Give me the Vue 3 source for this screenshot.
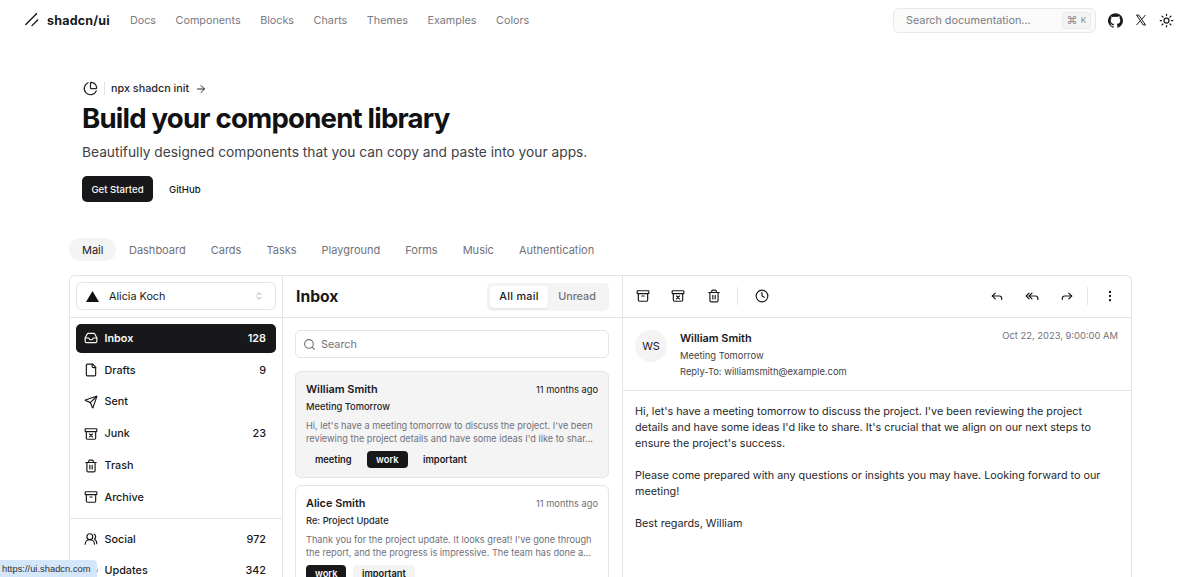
<template>
  <div class="page">
    <header class="topbar">
      <a class="logo">
        <svg width="18" height="18" viewBox="0 0 256 256" fill="none" stroke="#18181b" stroke-width="20" stroke-linecap="round">
          <line x1="208" y1="128" x2="128" y2="208" />
          <line x1="192" y1="40" x2="40" y2="192" />
        </svg>
        <span>shadcn/ui</span>
      </a>
      <nav class="topnav">
        <a v-for="link in topLinks" :key="link">{{ link }}</a>
      </nav>
      <div class="search-doc">
        <span>Search documentation...</span>
        <kbd><i>⌘</i>K</kbd>
      </div>
      <div class="top-icons">
        <svg width="15" height="15" viewBox="0 0 24 24" fill="#18181b">
          <path d="M12 .3a12 12 0 0 0-3.8 23.38c.6.12.83-.26.83-.57l-.02-2.04c-3.34.72-4.04-1.61-4.04-1.61-.55-1.39-1.33-1.76-1.33-1.76-1.09-.74.08-.73.08-.73 1.2.09 1.84 1.24 1.84 1.24 1.07 1.83 2.8 1.3 3.49 1 .1-.78.42-1.31.76-1.61-2.66-.3-5.47-1.33-5.47-5.93 0-1.31.47-2.38 1.24-3.22-.14-.3-.54-1.52.1-3.18 0 0 1.01-.32 3.3 1.23a11.5 11.5 0 0 1 6 0c2.28-1.55 3.29-1.23 3.29-1.23.64 1.66.24 2.88.12 3.18.77.84 1.23 1.91 1.23 3.22 0 4.61-2.81 5.63-5.48 5.92.42.37.81 1.1.81 2.22l-.01 3.29c0 .31.21.69.82.57A12 12 0 0 0 12 .3" />
        </svg>
        <svg width="12" height="12" viewBox="0 0 24 24" fill="none" stroke="#18181b" stroke-width="2">
          <path d="M3 2h4.5L21 22h-4.5zM21 2l-8 9M3 22l8-9" />
        </svg>
        <svg class="ico" width="15" height="15" viewBox="0 0 24 24">
          <circle cx="12" cy="12" r="4" />
          <path d="M12 2v2M12 20v2M4.93 4.93l1.41 1.41M17.66 17.66l1.41 1.41M2 12h2M20 12h2M6.34 17.66l-1.41 1.41M19.07 4.93l-1.41 1.41" />
        </svg>
      </div>
    </header>

    <main class="content">
      <section class="hero">
        <div class="announce">
          <svg class="ico" width="15" height="15" viewBox="0 0 24 24">
            <path d="M21 12c.55 0 1-.45.95-1A10 10 0 0 0 13 2.05c-.55-.05-1 .4-1 .95v8a1 1 0 0 0 1 1z" />
            <path d="M21.2 15.9A10 10 0 1 1 8 2.8" />
          </svg>
          <span class="announce-sep"></span>
          <span>npx shadcn init</span>
          <svg class="ico" width="12" height="12" viewBox="0 0 24 24">
            <path d="M5 12h14M12 5l7 7-7 7" />
          </svg>
        </div>
        <h1>Build your component library</h1>
        <p class="lead">Beautifully designed components that you can copy and paste into your apps.</p>
        <div class="hero-actions">
          <a class="btn-dark">Get Started</a>
          <a class="btn-ghost">GitHub</a>
        </div>
      </section>

      <div class="tabs">
        <a v-for="(tab, i) in tabs" :key="tab" :class="{ active: i === 0 }">{{ tab }}</a>
      </div>

      <section class="mail">
        <aside class="sidebar">
          <div class="account-row">
            <div class="account">
              <svg width="13" height="11" viewBox="0 0 13 11"><path d="M6.5 0 13 11H0z" fill="#111" /></svg>
              <span>Alicia Koch</span>
              <svg class="ico chev" width="10" height="10" viewBox="0 0 24 24"><path d="m7 15 5 5 5-5M7 9l5-5 5 5" /></svg>
            </div>
          </div>
          <ul class="folders">
            <li v-for="(f, i) in folders" :key="f.name" :class="{ selected: i === 0 }">
              <svg class="ico" width="14" height="14" viewBox="0 0 24 24" v-html="f.icon"></svg>
              <span>{{ f.name }}</span>
              <b v-if="f.count">{{ f.count }}</b>
            </li>
          </ul>
          <ul class="folders second">
            <li v-for="f in categories" :key="f.name">
              <svg class="ico" width="14" height="14" viewBox="0 0 24 24" v-html="f.icon"></svg>
              <span>{{ f.name }}</span>
              <b>{{ f.count }}</b>
            </li>
          </ul>
        </aside>

        <div class="list">
          <div class="list-head">
            <h2>Inbox</h2>
            <div class="toggle">
              <a class="on">All mail</a>
              <a>Unread</a>
            </div>
          </div>
          <div class="list-body">
            <div class="list-search">
              <svg class="ico" width="13" height="13" viewBox="0 0 24 24"><circle cx="11" cy="11" r="8" /><path d="m21 21-4.3-4.3" /></svg>
              <span>Search</span>
            </div>
            <article v-for="(m, i) in mails" :key="m.name" class="mail-card" :class="{ current: i === 0 }">
              <div class="mail-top">
                <strong>{{ m.name }}</strong>
                <time>11 months ago</time>
              </div>
              <div class="mail-subject">{{ m.subject }}</div>
              <p>{{ m.preview[0] }}<br />{{ m.preview[1] }}</p>
              <div class="tags">
                <span v-for="t in m.tags" :key="t" :class="['tag', m.tagStyle, { dark: t === 'work' }]">{{ t }}</span>
              </div>
            </article>
          </div>
        </div>

        <div class="reader">
          <div class="toolbar">
            <div class="tool-group">
              <button v-for="(ic, i) in toolsLeft" :key="i"><svg class="ico" width="14" height="14" viewBox="0 0 24 24" v-html="ic"></svg></button>
              <span class="tool-sep"></span>
              <button><svg class="ico" width="14" height="14" viewBox="0 0 24 24"><circle cx="12" cy="12" r="10" /><path d="M12 6v6l4 2" /></svg></button>
            </div>
            <div class="tool-group right">
              <button v-for="(ic, i) in toolsRight" :key="i"><svg class="ico" width="14" height="14" viewBox="0 0 24 24" v-html="ic"></svg></button>
              <span class="tool-sep"></span>
              <button><svg class="ico" width="14" height="14" viewBox="0 0 24 24"><circle cx="12" cy="12" r="1" /><circle cx="12" cy="5" r="1" /><circle cx="12" cy="19" r="1" /></svg></button>
            </div>
          </div>
          <div class="msg-head">
            <div class="avatar">WS</div>
            <div class="msg-meta">
              <strong>William Smith</strong>
              <span>Meeting Tomorrow</span>
              <span>Reply-To: williamsmith@example.com</span>
            </div>
            <time>Oct 22, 2023, 9:00:00 AM</time>
          </div>
          <div class="msg-body">
            <p>Hi, let's have a meeting tomorrow to discuss the project. I've been reviewing the project<br />details and have some ideas I'd like to share. It's crucial that we align on our next steps to<br />ensure the project's success.</p>
            <p>Please come prepared with any questions or insights you may have. Looking forward to our<br />meeting!</p>
            <p>Best regards, William</p>
          </div>
        </div>
      </section>
    </main>

    <div class="status-url">https://ui.shadcn.com</div>
  </div>
</template>

<script setup>
const topLinks = ['Docs', 'Components', 'Blocks', 'Charts', 'Themes', 'Examples', 'Colors']
const tabs = ['Mail', 'Dashboard', 'Cards', 'Tasks', 'Playground', 'Forms', 'Music', 'Authentication']

const archiveIcon = '<rect x="2" y="3" width="20" height="5" rx="1"/><path d="M4 8v11a2 2 0 0 0 2 2h12a2 2 0 0 0 2-2V8M10 12h4"/>'
const junkIcon = '<rect x="2" y="3" width="20" height="5" rx="1"/><path d="M4 8v11a2 2 0 0 0 2 2h12a2 2 0 0 0 2-2V8M9.5 12l5 5M14.5 12l-5 5"/>'
const trashIcon = '<path d="M3 6h18M19 6v14a2 2 0 0 1-2 2H7a2 2 0 0 1-2-2V6M8 6V4a2 2 0 0 1 2-2h4a2 2 0 0 1 2 2v2M10 11v6M14 11v6"/>'

const folders = [
  { name: 'Inbox', count: '128', icon: '<path d="M22 12h-6l-2 3h-4l-2-3H2"/><path d="M5.45 5.11 2 12v6a2 2 0 0 0 2 2h16a2 2 0 0 0 2-2v-6l-3.45-6.89A2 2 0 0 0 16.76 4H7.24a2 2 0 0 0-1.79 1.11z"/>' },
  { name: 'Drafts', count: '9', icon: '<path d="M15 2H6a2 2 0 0 0-2 2v16a2 2 0 0 0 2 2h12a2 2 0 0 0 2-2V7z"/><path d="M14 2v4a2 2 0 0 0 2 2h4"/>' },
  { name: 'Sent', icon: '<path d="M14.5 21.7a.5.5 0 0 0 .9 0l6.5-19a.5.5 0 0 0-.6-.6l-19 6.5a.5.5 0 0 0 0 .9l7.9 3.2a2 2 0 0 1 1.1 1.1z"/><path d="m21.85 2.15-10.94 10.93"/>' },
  { name: 'Junk', count: '23', icon: junkIcon },
  { name: 'Trash', icon: trashIcon },
  { name: 'Archive', icon: archiveIcon },
]
const categories = [
  { name: 'Social', count: '972', icon: '<path d="M18 21a8 8 0 0 0-16 0"/><circle cx="10" cy="8" r="5"/><path d="M22 20c0-3.37-2-6.5-4-8a5 5 0 0 0-.45-8.3"/>' },
  { name: 'Updates', count: '342', icon: '<circle cx="12" cy="12" r="10"/><path d="M12 16v-4M12 8h.01"/>' },
]

const mails = [
  {
    name: 'William Smith',
    subject: 'Meeting Tomorrow',
    preview: ["Hi, let's have a meeting tomorrow to discuss the project. I've been", "reviewing the project details and have some ideas I'd like to shar..."],
    tags: ['meeting', 'work', 'important'],
    tagStyle: 'plain',
  },
  {
    name: 'Alice Smith',
    subject: 'Re: Project Update',
    preview: ["Thank you for the project update. It looks great! I've gone through", 'the report, and the progress is impressive. The team has done a...'],
    tags: ['work', 'important'],
    tagStyle: 'soft',
  },
]

const toolsLeft = [archiveIcon, junkIcon, trashIcon]
const toolsRight = [
  '<path d="M20 18v-2a4 4 0 0 0-4-4H4"/><path d="m9 17-5-5 5-5"/>',
  '<path d="m7 17-5-5 5-5"/><path d="m12 17-5-5 5-5"/><path d="M22 18v-2a4 4 0 0 0-4-4H7"/>',
  '<path d="m15 17 5-5-5-5"/><path d="M4 18v-2a4 4 0 0 1 4-4h12"/>',
]
</script>

<style>
html,
body {
  margin: 0;
  height: 577px;
  overflow: hidden;
  background: #fff;
}
</style>

<style scoped>
.page {
  height: 577px;
  overflow: hidden;
  font-family: Inter, "Liberation Sans", sans-serif;
  color: #18181b;
  background: #fff;
  font-size: 10.8px;
}
.ico {
  fill: none;
  stroke: currentColor;
  stroke-width: 2;
  stroke-linecap: round;
  stroke-linejoin: round;
  flex: none;
}
a {
  text-decoration: none;
}

/* top bar */
.topbar {
  height: 40px;
  display: flex;
  align-items: center;
  padding: 0 26px 0 23px;
}
.logo {
  display: flex;
  align-items: center;
  gap: 6px;
  font-weight: 700;
  font-size: 12.5px;
  letter-spacing: 0.2px;
}
.topnav {
  display: flex;
  gap: 19.5px;
  margin-left: 20px;
  color: #7a7a82;
}
.search-doc {
  margin-left: auto;
  width: 203px;
  height: 25px;
  box-sizing: border-box;
  border: 1px solid #e8e8ea;
  border-radius: 6px;
  background: #fafafa;
  display: flex;
  align-items: center;
  justify-content: space-between;
  padding: 0 4px 0 12px;
  color: #7a7a82;
}
kbd {
  font-family: inherit;
  font-size: 8px;
  height: 15px;
  padding: 0 4px;
  display: flex;
  align-items: center;
  gap: 3px;
  border: 1px solid #ececee;
  border-radius: 3px;
  background: #f4f4f5;
  color: #888;
}
kbd i {
  font-style: normal;
  font-size: 11px;
}
.top-icons {
  display: flex;
  align-items: center;
  gap: 12px;
  margin-left: 12px;
}

/* hero + main column */
.content {
  padding: 0 68px 0 69px;
}
.hero {
  padding: 41px 0 0 13px;
}
.announce {
  height: 15px;
  display: flex;
  align-items: center;
  gap: 6px;
  font-weight: 500;
  color: #27272a;
}
.announce > svg:first-child {
  margin-left: 1px;
}
.announce-sep {
  width: 1px;
  height: 13px;
  background: #e4e4e7;
}
h1 {
  margin: 4px 0 0;
  font-size: 27.6px;
  line-height: 36px;
  font-weight: 700;
  letter-spacing: -0.8px;
  color: #111113;
}
.lead {
  margin: 6px 0 0;
  font-size: 13.75px;
  line-height: 20px;
  color: #3f3f46;
}
.hero-actions {
  display: flex;
  align-items: center;
  margin-top: 14px;
  font-size: 9.6px;
  font-weight: 500;
}
.btn-dark {
  height: 26px;
  width: 71px;
  border-radius: 5px;
  background: #18181b;
  color: #fafafa;
  display: flex;
  align-items: center;
  justify-content: center;
}
.btn-ghost {
  margin-left: 16px;
}

/* tabs */
.tabs {
  display: flex;
  align-items: center;
  margin-top: 36px;
  height: 23px;
  font-size: 11px;
  color: #71717a;
}
.tabs a {
  height: 23px;
  display: flex;
  align-items: center;
  padding: 0 12.5px;
  border-radius: 12px;
}
.tabs a.active {
  padding: 0 13px;
  background: #f4f4f5;
  color: #18181b;
}

/* mail panel */
.mail {
  margin-top: 14px;
  height: 330px;
  box-sizing: border-box;
  border: 1px solid #e4e4e7;
  border-bottom: 0;
  border-radius: 6px 6px 0 0;
  display: grid;
  grid-template-columns: 213px 340px 1fr;
}
.sidebar {
  border-right: 1px solid #e4e4e7;
}
.account-row {
  height: 42px;
  box-sizing: border-box;
  border-bottom: 1px solid #e4e4e7;
  padding: 6px 6px;
}
.account {
  height: 28px;
  box-sizing: border-box;
  border: 1px solid #e4e4e7;
  border-radius: 5px;
  display: flex;
  align-items: center;
  gap: 10px;
  padding: 0 11px 0 9px;
}
.chev {
  margin-left: auto;
  color: #999;
}
.folders {
  list-style: none;
  margin: 0;
  padding: 6px;
  display: flex;
  flex-direction: column;
  gap: 3px;
  border-bottom: 1px solid #e4e4e7;
}
.folders.second {
  border-bottom: 0;
}
.folders li {
  height: 28.8px;
  display: flex;
  align-items: center;
  gap: 6.5px;
  padding: 0 10px 0 8px;
  border-radius: 5px;
}
.folders li span {
  font-weight: 500;
}
.folders li b {
  margin-left: auto;
  font-weight: 500;
}
.folders li.selected {
  background: #18181b;
  color: #fafafa;
}
.folders li.selected span,
.folders li.selected b {
  font-weight: 600;
}
.list {
  border-right: 1px solid #e4e4e7;
}
.list-head {
  height: 42px;
  box-sizing: border-box;
  border-bottom: 1px solid #e4e4e7;
  display: flex;
  align-items: center;
  justify-content: space-between;
  padding: 0 13px;
}
h2 {
  margin: 0;
  font-size: 15.7px;
  font-weight: 700;
  color: #18181b;
}
.toggle {
  width: 122px;
  height: 28px;
  box-sizing: border-box;
  padding: 3px;
  border-radius: 5px;
  background: #f4f4f5;
  display: flex;
  align-items: center;
  font-weight: 500;
  color: #71717a;
}
.toggle a {
  flex: 1;
  height: 22px;
  display: flex;
  align-items: center;
  justify-content: center;
  border-radius: 4px;
}
.toggle a.on {
  background: #fff;
  color: #18181b;
  box-shadow: 0 1px 2px rgba(0, 0, 0, 0.08);
  letter-spacing: 0.3px;
}
.list-body {
  padding: 12px 13px 0 12px;
  display: flex;
  flex-direction: column;
  gap: 7px;
}
.list-search {
  height: 28px;
  box-sizing: border-box;
  border: 1px solid #e4e4e7;
  border-radius: 5px;
  display: flex;
  align-items: center;
  gap: 5px;
  padding: 0 6px 0 7px;
  color: #71717a;
  margin-bottom: 6px;
}
.mail-card {
  border: 1px solid #e4e4e7;
  border-radius: 6px;
  padding: 9px 10px;
  box-sizing: border-box;
  height: 107px;
  flex: none;
}
.mail-card.current {
  background: #f4f4f5;
}
.mail-top {
  display: flex;
  align-items: center;
  justify-content: space-between;
  height: 16px;
}
.mail-top strong {
  font-size: 10.9px;
  font-weight: 600;
}
.mail-top time {
  font-size: 9.3px;
  color: #71717a;
}
.current .mail-top time {
  color: #18181b;
}
.mail-subject {
  margin-top: 2px;
  font-size: 9.3px;
  font-weight: 500;
  line-height: 16px;
  color: #27272a;
}
.mail-card p {
  margin: 4px 0 0;
  font-size: 9.2px;
  line-height: 13px;
  color: #71717a;
  white-space: nowrap;
}
.tags {
  display: flex;
  gap: 6.5px;
  margin-top: 6px;
}
.tag {
  height: 17px;
  padding: 0 9px;
  display: flex;
  align-items: center;
  border-radius: 4px;
  font-size: 9.3px;
  font-weight: 600;
}
.tag.soft {
  background: #f4f4f5;
}
.tag.dark {
  background: #18181b;
  color: #fafafa;
}
.toolbar {
  height: 42px;
  box-sizing: border-box;
  border-bottom: 1px solid #e4e4e7;
  display: flex;
  align-items: center;
  justify-content: space-between;
  padding: 0 3.4px 2px 2.4px;
}
.tool-group {
  display: flex;
  align-items: center;
}
.tool-group button {
  width: 28px;
  height: 28px;
  margin: 0 3.65px;
  padding: 0;
  border: 0;
  background: none;
  color: #18181b;
  display: flex;
  align-items: center;
  justify-content: center;
}
.tool-sep {
  width: 1px;
  height: 18px;
  background: #e4e4e7;
  margin: 0 6px;
}
.tool-group.right .tool-sep {
  margin: 0 4px 0 2.5px;
}
.msg-head {
  height: 73px;
  box-sizing: border-box;
  border-bottom: 1px solid #e4e4e7;
  display: flex;
  padding: 12px 13px 12px 12px;
}
.avatar {
  width: 32px;
  height: 32px;
  border-radius: 50%;
  background: #f4f4f5;
  display: flex;
  align-items: center;
  justify-content: center;
}
.msg-meta {
  margin-left: 13px;
  display: flex;
  flex-direction: column;
  font-size: 9.4px;
  line-height: 16px;
  color: #3f3f46;
}
.msg-meta strong {
  font-size: 10.9px;
  font-weight: 600;
  line-height: 16px;
  margin-bottom: 2px;
  color: #18181b;
}
.msg-head time {
  margin-left: auto;
  font-size: 9.4px;
  color: #71717a;
}
.msg-body {
  padding: 13px 12px;
  line-height: 16px;
  color: #27272a;
}
.msg-body p {
  margin: 0 0 16px;
}
.status-url {
  position: fixed;
  left: 0;
  bottom: 0;
  height: 17px;
  width: 97px;
  box-sizing: border-box;
  padding-left: 2px;
  display: flex;
  align-items: center;
  background: #d4e6f9;
  border-radius: 0 4px 0 0;
  font-family: "Liberation Sans", sans-serif;
  font-size: 9.4px;
  color: #333;
}
</style>
